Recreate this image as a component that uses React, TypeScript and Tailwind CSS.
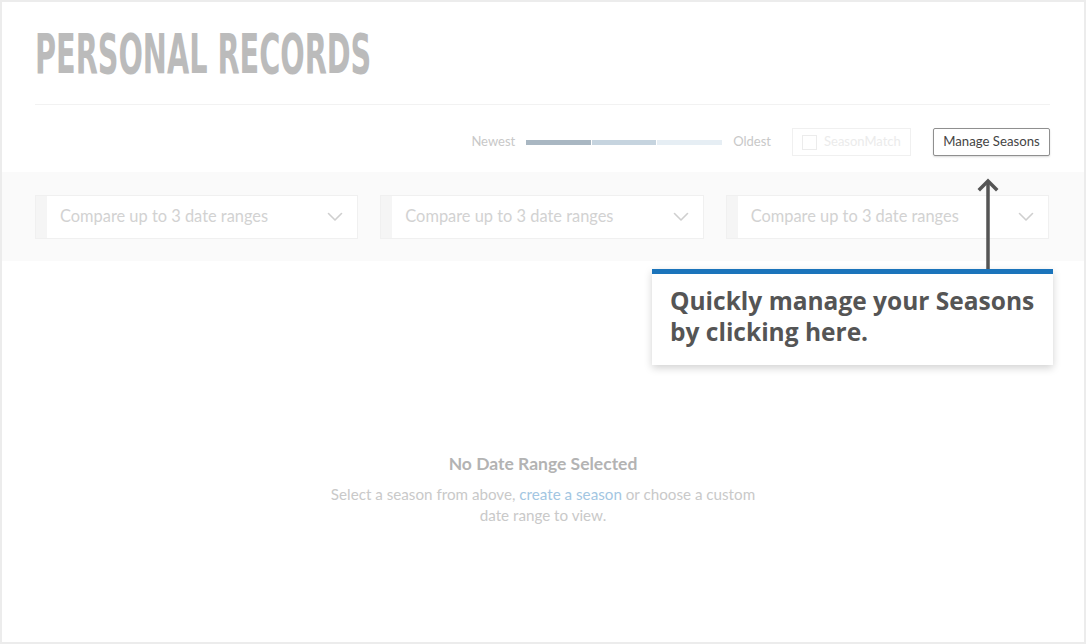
import React from 'react';

const ChevronDown: React.FC = () => (
  <svg width="16" height="10" viewBox="0 0 16 10" fill="none" className="shrink-0">
    <path d="M1.5 1.5 L8 8 L14.5 1.5" stroke="#cfcfcf" strokeWidth="1.6" strokeLinecap="round" strokeLinejoin="round" />
  </svg>
);

const RangeSelect: React.FC = () => (
  <div className="flex h-[44px] flex-1 border border-[#f0f0f0] bg-white">
    <div className="w-[11px] shrink-0 bg-[#f5f5f5]" />
    <div className="flex flex-1 items-center justify-between pl-[13px] pr-[14px]">
      <span className="text-[16.4px] text-[#d2d2d2]">Compare up to 3 date ranges</span>
      <ChevronDown />
    </div>
  </div>
);

export default function App() {
  return (
    <div
      className="relative h-[644px] w-[1086px] overflow-hidden border-2 border-[#ececec] bg-white"
      style={{ fontFamily: 'Lato, "Open Sans", sans-serif' }}
    >
      <div className="pl-[33px] pr-[34px] pt-[22px]">
        <div className="h-[81px] border-b border-[#f2f2f2]">
          <h1
            className="inline-block origin-left scale-x-[0.57] text-[56px] font-bold uppercase leading-[60px] text-[#bbbbbb]"
            style={{ fontFamily: '"Liberation Sans Narrow", "DejaVu Sans Condensed", "Liberation Sans", sans-serif' }}
          >
            Personal Records
          </h1>
        </div>

        <div className="mt-[23px] flex items-center justify-end">
          <span className="text-[13px] text-[#c8c8c8]">Newest</span>
          <div className="ml-[11px] flex h-[5px] gap-px">
            <div className="w-[65px] bg-[#a9b7c2]" />
            <div className="w-[64px] bg-[#c6d4df]" />
            <div className="w-[65px] bg-[#e6eef4]" />
          </div>
          <span className="ml-[11px] text-[13px] text-[#c8c8c8]">Oldest</span>
          <div className="ml-[21px] flex h-[28px] w-[119px] items-center border border-[#f0f0f0] pl-[9px]">
            <div className="h-[15px] w-[15px] border border-[#ececec]" />
            <span className="ml-[7px] text-[13px] text-[#ebebeb]">SeasonMatch</span>
          </div>
          <button className="ml-[22px] h-[28px] w-[117px] rounded-[2px] border border-[#8f8f8f] bg-white text-[13.2px] text-[#444] shadow-[0_1px_2px_rgba(0,0,0,0.15)]">
            Manage Seasons
          </button>
        </div>
      </div>

      <div className="mt-[16px] flex h-[89px] items-center gap-[22px] bg-[#fafafa] pl-[33px] pr-[35px]">
        <RangeSelect />
        <RangeSelect />
        <RangeSelect />
      </div>

      <div className="mt-[190px] flex flex-col items-center text-center">
        <p className="text-[17.5px] font-bold text-[#b3b3b3]">No Date Range Selected</p>
        <p className="mt-[7px] w-[440px] text-[15.2px] leading-[21px] text-[#c9c9c9]">
          Select a season from above, <span className="text-[#a3c6e2]">create a season</span> or choose a custom
          <br />
          date range to view.
        </p>
      </div>

      {/* callout pointing at the Manage Seasons button */}
      <svg className="absolute left-[975px] top-[176px]" width="22" height="94" viewBox="0 0 22 94" fill="none">
        <path d="M11 3 V94" stroke="#555" strokeWidth="3.5" />
        <path d="M3 11 L11 3 L19 11" stroke="#555" strokeWidth="3.5" strokeLinecap="square" />
      </svg>
      <div
        className="absolute left-[650px] top-[267px] w-[401px] border-t-[5px] border-[#1b74bb] bg-white pb-[18px] pl-[18px] pr-[4px] pt-[11px] shadow-[0_3px_8px_rgba(0,0,0,0.18)]"
        style={{ fontFamily: '"Open Sans", Lato, sans-serif' }}
      >
        <p className="whitespace-nowrap text-[24.5px] font-bold leading-[31px] text-[#555555]">
          Quickly manage your Seasons
          <br />
          by clicking here.
        </p>
      </div>
    </div>
  );
}
